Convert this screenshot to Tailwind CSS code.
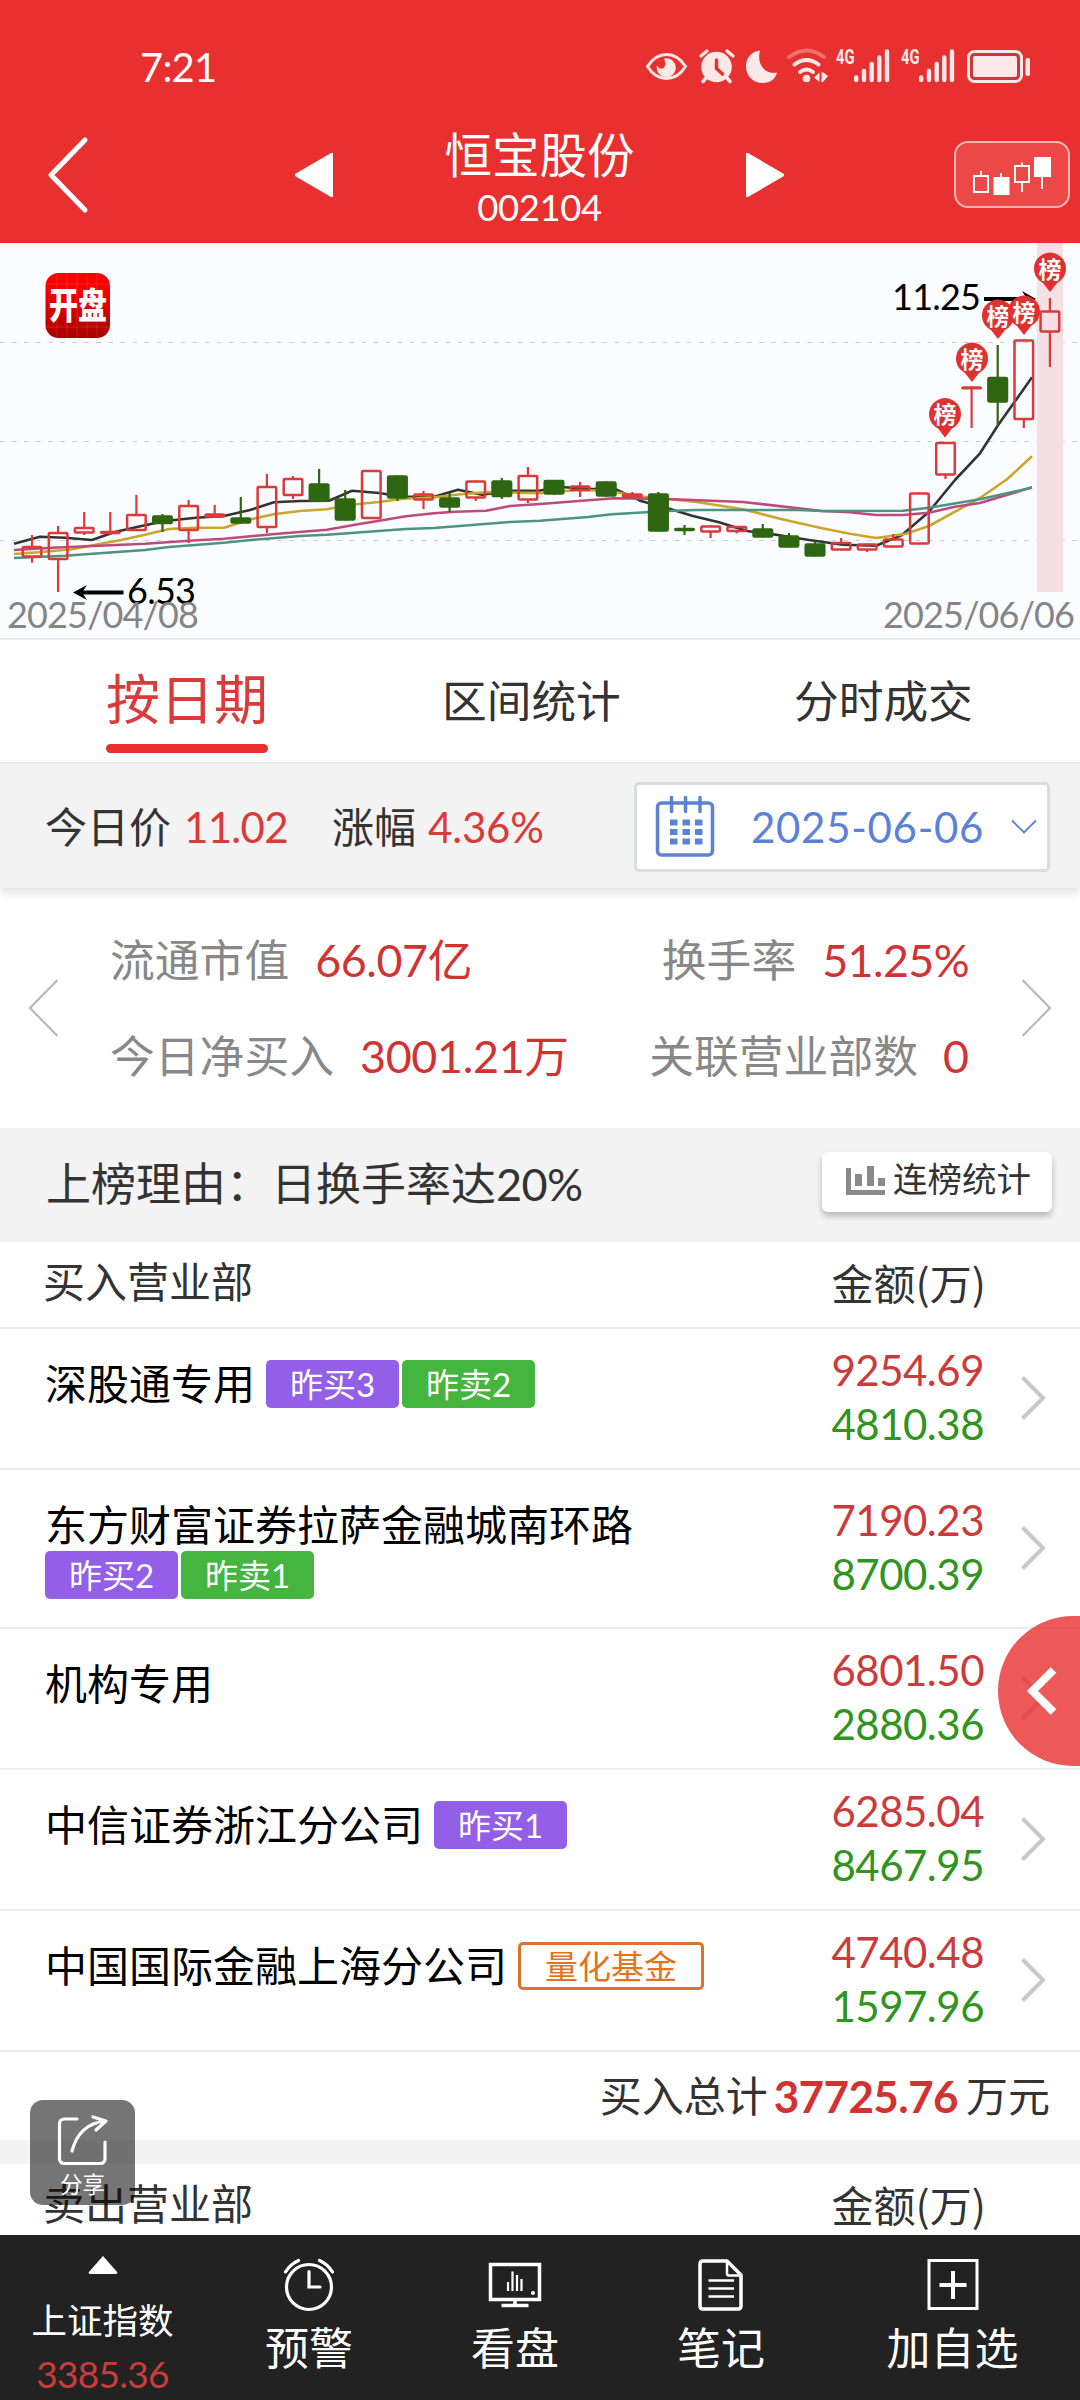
<!DOCTYPE html>
<html lang="zh-CN">
<head>
<meta charset="utf-8">
<title>恒宝股份 002104</title>
<script src="https://cdn.jsdelivr.net/npm/@tailwindcss/browser@4"></script>
</head>
<body class="bg-white">
<div class="relative flex h-[2400px] w-[1080px] flex-col overflow-hidden bg-white font-['Lato','Noto_Sans_CJK_SC',sans-serif] text-[42px] leading-none text-[#333] whitespace-nowrap">

  <!-- header -->
  <header class="flex h-[243px] shrink-0 flex-col bg-[#e83030] text-white">
    <div class="flex h-[134px] items-center justify-between pl-[140px] pr-[49px]">
      <span class="text-[40px] tracking-[-0.8px]">7:21</span>
      <svg class="h-[56px] w-[388px]" viewBox="643 38 388 56" fill="#fde8e8">
        <path d="M647.500 65.500Q655 53.500 666.500 53.500T685.500 65.500Q678 77.500 666.500 77.500T647.500 65.500Z" fill="none" stroke="#fde8e8" stroke-width="3"/>
        <path d="M664 57.500a9.500 9.500 0 1 1-7 7q3 5 6.500 2.500t.5-9.500Z"/>
        <circle cx="716.500" cy="66" r="15.300"/>
        <path d="M701 55l6-5M727 50l6 5M706 77l-3 3.500M727 77l3 3.500" stroke="#fde8e8" stroke-width="3.500" stroke-linecap="round"/>
        <path d="M716.500 59v8.500l6 5.500" fill="none" stroke="#e83030" stroke-width="3.500" stroke-linecap="round"/>
        <path d="M760 49.500C750 51 746 58 746 65.500C746 75 753 82 762.500 82C770 82 775.500 78 777 71.500C766 74 756 64 760 49.500Z"/>
        <g fill="none" stroke="#fde8e8" stroke-width="4" stroke-linecap="round">
          <path d="M789 56q18-13 35 0" opacity=".35"/>
          <path d="M794.500 63.500q12-9 24 0"/>
          <path d="M800 71q6.500-5 13 0"/>
        </g>
        <circle cx="806.500" cy="77.500" r="3.800"/>
        <path d="M819.500 71.500v9.500l-5.500-4.500zM821.500 71.500h2l4.500 3.500-5 6h-1.500z"/>
        <g font-family="Roboto" font-weight="700" font-size="20">
          <text x="836" y="62.500" textLength="18.500" lengthAdjust="spacingAndGlyphs">4G</text>
          <text x="901" y="62.500" textLength="18.500" lengthAdjust="spacingAndGlyphs">4G</text>
        </g>
        <g stroke="#fde8e8" stroke-width="4.400" stroke-linecap="round">
          <path d="M856.200 76.500v2.500M864 70v9M871.700 63v16M879.300 56.500v22.500M887 50.500v28.500"/>
          <path d="M921.200 76.500v2.500M929 70v9M936.700 63v16M944.300 56.500v22.500M952 50.500v28.500"/>
        </g>
        <rect x="968.500" y="50.500" width="53" height="30" rx="6" fill="#c83a3a" stroke="#fde8e8" stroke-width="3"/>
        <rect x="973" y="55" width="44" height="21" rx="2"/>
        <rect x="1025.500" y="57" width="4.500" height="18" rx="2"/>
      </svg>
    </div>
    <div class="flex h-[109px] items-center justify-between pl-[47px] pr-[10px]">
      <svg class="mt-[-28px] h-[78px] w-[42px]" viewBox="0 0 42 78" fill="none" stroke="#fff" stroke-width="5" stroke-linecap="round" stroke-linejoin="round"><path d="M38 4L4 39 38 74"/></svg>
      <svg class="mt-[-28px] ml-[94px] h-[46px] w-[40px]" viewBox="0 0 40 46" fill="#fff"><path d="M39 1v44h-2L1 24v-2L37 1z"/></svg>
      <div class="flex flex-col items-center pt-1">
        <div class="mt-[-11px] text-[47.500px] leading-[52px]">恒宝股份</div>
        <div class="mb-[8px] text-[36.500px] leading-[52px] tracking-[-0.400px]">002104</div>
      </div>
      <svg class="mt-[-28px] mr-[58px] h-[46px] w-[40px]" viewBox="0 0 40 46" fill="#fff"><path d="M1 1v44h2l36-21v-2L3 1z"/></svg>
      <div class="mt-[-28px] flex h-[67px] w-[116px] items-center justify-center rounded-[14px] border-2 border-[#f7b4b4] bg-[#ec4848]">
        <svg class="h-[40px] w-[80px]" viewBox="973 154 80 40" fill="none" stroke="#fff" stroke-width="2">
          <path d="M975 175h14v16h-14zM982 170v5M1016 165h14v16h-14zM1023 161.500v3.500M1023 181v10M1002 172v5M1043 175v13"/>
          <path fill="#fff" d="M995.500 177h14v16.500h-14zM1036 157h15v18h-15z"/>
        </svg>
      </div>
    </div>
  </header>

  <!-- daily K-line chart -->
  <section class="h-[397px] shrink-0 border-b-2 border-[#ebebee] bg-[#fbfcff]">
    <svg class="block h-[395px] w-[1080px]" viewBox="0 3 1080 395" fill="none">
      <defs>
        <linearGradient id="lg" x1="0" y1="0" x2="0" y2="1"><stop offset="0" stop-color="#f00"/><stop offset=".25" stop-color="#f80000"/><stop offset="1" stop-color="#a80000"/></linearGradient>
        <g id="pin">
          <path fill="#e03030" d="M0 23L-7 14A16 16 0 1 1 7 14Z"/>
          <text x="0" y="8.500" text-anchor="middle" font-size="23" font-weight="700" fill="#fff">榜</text>
        </g>
      </defs>
      <path d="M0 102.500H1080M0 201.500H1080M0 300.500H1080" stroke="#c9c9cf" stroke-width="1" stroke-dasharray="4.500 7.550"/>
      <rect x="45.500" y="33" width="64.500" height="65" rx="13" fill="url(#lg)"/>
      <path d="M57 34v63M67 34v63M77 34v63M87 34v63M97 34v63M46 44h63M46 87h63" stroke="#fff" stroke-opacity=".13"/>
      <text x="49" y="79" font-size="36" font-weight="900" fill="#fff" textLength="58" lengthAdjust="spacingAndGlyphs">开盘</text>
      <rect x="1037" y="3" width="26" height="349" fill="#f6dfe5"/>
      <g stroke-width="2.600" stroke-linejoin="round">
        <polyline stroke="#333" points="14,303.7 40,296.7 65,297.7 92,300 114,292.3 138,286.7 165,281 196,277.7 224,276 250,270 274,262.3 300,261 329,260.7 352,250.7 379,253 403,256.7 434,256.7 458,249.7 482,254.7 510,250.7 540,250.5 561,247 592,249 614,248.3 640,260.7 667,268 692,275.7 719,282.3 747,291 778,295 809,300 843,304.7 876,305.7 902,295 929,271.7 955,240 980,213.3 998,185.3 1032,137.3"/>
        <polyline stroke="#c9a62c" points="14,314 41,312 72,309.3 93,305.3 121,300 145,294.7 169,289 196,287.7 224,287.7 251,279.3 275,274 300,271 327,269.3 348,265 379,262 403,258.7 434,257.3 461,254.3 489,252 517,252.7 540,253.3 578,250 609,251 643,256.7 667,259 695,261.7 743,269.3 781,279 822,288.3 850,293.7 876,298 905,294 929,286 955,271.7 980,258 1007,239.3 1032,216.3"/>
        <polyline stroke="#bd4a7c" points="14,310 52,307.7 93,306 145,303.7 189,300.7 224,298.7 275,294 327,289.7 355,284.7 406,276.3 434,273.3 455,271.7 486,270.7 510,266 540,264 614,258.3 667,259 743,262 822,271 850,272.3 876,275 903,275 929,272.7 955,266.7 980,263 1032,247.3"/>
        <polyline stroke="#4a9480" points="14,318 65,315.7 145,310 169,307 224,302.7 251,300 300,296 327,294.7 406,289 434,288 510,282 540,280.7 588,277 612,274.3 667,271 695,270 798,270 822,271 903,270.7 929,267.7 980,259.3 1007,253.3 1032,247.7"/>
      </g>
      <g id="candles"></g>
      <path d="M78 352.500H123.500" stroke="#000" stroke-width="4"/>
      <path d="M73 352.500l14-7.500-5 7.500 5 7.500z" fill="#000"/>
      <path d="M984 59H1030" stroke="#000" stroke-width="4"/>
      <path d="M1036 59l-14-8 5 8-5 7.500z" fill="#000"/>
      <g font-size="36">
        <text x="892" y="70" fill="#000" textLength="89">11.25</text>
        <text x="127" y="363.500" fill="#000" textLength="69">6.53</text>
        <g fill="#858585">
          <text x="7" y="387.500" textLength="192">2025/04/08</text>
          <text x="883" y="387.500" textLength="192">2025/06/06</text>
        </g>
      </g>
      <use href="#pin" x="945" y="174.500"/><use href="#pin" x="972" y="119"/><use href="#pin" x="998" y="76"/><use href="#pin" x="1024" y="72"/><use href="#pin" x="1050" y="29"/>
    </svg>
  </section>

  <!-- tabs -->
  <nav class="flex h-[122px] shrink-0 items-center">
    <div class="relative ml-[106px] mr-[174px] flex h-full w-[162px] items-center justify-center pb-[2px] text-[54px] text-[#d93a3a]">按日期<i class="absolute bottom-[9px] left-0 h-[9px] w-full rounded-full bg-[#e83030]"></i></div>
    <div class="w-[179px] text-[44.700px]">区间统计</div>
    <div class="ml-[173px] text-[44.700px]">分时成交</div>
  </nav>

  <!-- price bar -->
  <section class="flex h-[126px] shrink-0 items-center border-t-2 border-[#ededed] bg-[#f3f3f3] pt-[2px] pl-[45px] pr-[30px] shadow-[0_6px_8px_rgba(0,0,0,0.1)]">
    <span class="text-[42px]">今日价</span>
    <span class="ml-[13px] w-[104px] tracking-[-0.700px] text-[#d93a3a]">11.02</span>
    <span class="ml-[44px] text-[42px]">涨幅</span>
    <span class="ml-[12px] tracking-[-0.200px] text-[#d93a3a]">4.36%</span>
    <div class="ml-auto flex h-[90px] w-[416px] items-center rounded-[5px] border-[3px] border-[#d9dde3] bg-white pl-[17px] text-[#5b82d6]">
      <svg class="h-[62px] w-[62px]" viewBox="0 0 62 62" fill="none" stroke="#5b82d6" stroke-width="3.500">
        <rect x="3.500" y="7" width="55" height="52" rx="4"/>
        <path d="M17.500 1.500v14M31.500 1.500v14M46 1.500v14" stroke-linecap="round"/>
        <path d="M16 26.500h33M16 36h33M16 45.500h33" stroke-width="6" stroke-dasharray="7.500 5"/>
      </svg>
      <span class="ml-[35px] w-[235px] text-[42px] tracking-[0.700px]">2025-06-06</span>
      <svg class="ml-[24px] h-[16px] w-[28px]" viewBox="0 0 28 16" fill="none" stroke="#5b82d6" stroke-width="1.800"><path d="M2 1.500L14 13.500 26 1.500"/></svg>
    </div>
  </section>

  <!-- statistics -->
  <section class="flex h-[240px] shrink-0 items-center px-[27px] text-[44.800px] text-[#888]">
    <svg class="h-[60px] w-[32px]" viewBox="0 0 32 60" fill="none" stroke="#b5b5b5" stroke-width="2"><path d="M30.500 2L3 30 30.500 58"/></svg>
    <div class="flex flex-1 flex-col gap-[51px] pl-[51px] pr-[52px]">
      <div class="flex justify-between">
        <div>流通市值<span class="ml-[26px] tracking-[-0.400px] text-[#d13333]">66.07亿</span></div>
        <div>换手率<span class="ml-[26px] tracking-[-0.600px] text-[#d13333]">51.25%</span></div>
      </div>
      <div class="flex justify-between">
        <div>今日净买入<span class="ml-[26px] tracking-[-0.300px] text-[#d13333]">3001.21万</span></div>
        <div>关联营业部数<span class="ml-[25px] text-[#d13333]">0</span></div>
      </div>
    </div>
    <svg class="h-[60px] w-[32px]" viewBox="0 0 32 60" fill="none" stroke="#b5b5b5" stroke-width="2"><path d="M1.500 2L29 30 1.500 58"/></svg>
  </section>

  <!-- reason -->
  <section class="flex h-[114px] shrink-0 items-center justify-between bg-[#f3f3f3] pl-[46px] pr-[28px] text-[45px]">
    <div class="mt-[-2px]">上榜理由：日换手率达<span class="tracking-[-0.600px]">20%</span></div>
    <div class="mt-[-7px] flex h-[60px] w-[230px] items-center rounded-[6px] bg-white pl-[24px] text-[34.500px] shadow-[0_4px_6px_rgba(0,0,0,0.25)]">
      <svg class="mt-[-4px] mr-[8px] h-[30px] w-[39px]" viewBox="0 0 39 30" fill="#8a8a8a"><path d="M0 3h5v22h34v5H0zM9 9h7v12h-7zM21 1h7v20h-7zM32 13h7v8h-7z"/></svg>
      <span class="-mt-[5px]">连榜统计</span>
    </div>
  </section>

  <!-- buy side -->
  <section class="flex shrink-0 flex-col text-black">
    <div class="flex h-[87px] items-center justify-between border-b-2 border-[#ededed] pl-[43px] pr-[94px] pb-[6px] text-[#333]"><span>买入营业部</span><span class="font-['Noto_Sans_CJK_SC',sans-serif]">金额(万)</span></div>

    <div class="flex h-[141px] items-center border-b-2 border-[#ededed] pl-[45px] pr-[32px]">
      <div class="mb-[30px] flex flex-1 items-center"><span class="mr-[11px]">深股通专用</span><b class="mr-[3px] h-[48px] w-[133px] rounded-[5px] bg-[#925fe6] text-center text-[33px] leading-[48px] font-normal text-white">昨买3</b><b class="h-[48px] w-[133px] rounded-[5px] bg-[#44b53e] text-center text-[33px] leading-[48px] font-normal text-white">昨卖2</b></div>
      <div class="mr-[36px] mt-[-4px] w-[153px] text-right leading-[54px] tracking-[-0.500px]"><div class="text-[#cc3b3b]">9254.69</div><div class="text-[#2f9420]">4810.38</div></div>
      <svg class="mt-[-1px] h-[46px] w-[28px]" viewBox="0 0 28 46" fill="none" stroke="#c8c8c8" stroke-width="4"><path d="M2.500 2.500L23 23 2.500 43.500"/></svg>
    </div>

    <div class="flex h-[159px] items-center border-b-2 border-[#ededed] pl-[45px] pr-[32px]">
      <div class="mt-[4px] flex flex-1 flex-col"><span class="mb-[4px] leading-[44px]">东方财富证券拉萨金融城南环路</span><span class="flex"><b class="mr-[3px] h-[48px] w-[133px] rounded-[5px] bg-[#925fe6] text-center text-[33px] leading-[48px] font-normal text-white">昨买2</b><b class="h-[48px] w-[133px] rounded-[5px] bg-[#44b53e] text-center text-[33px] leading-[48px] font-normal text-white">昨卖1</b></span></div>
      <div class="mr-[36px] mt-[-4px] w-[153px] text-right leading-[54px] tracking-[-0.500px]"><div class="text-[#cc3b3b]">7190.23</div><div class="text-[#2f9420]">8700.39</div></div>
      <svg class="mt-[-1px] h-[46px] w-[28px]" viewBox="0 0 28 46" fill="none" stroke="#c8c8c8" stroke-width="4"><path d="M2.500 2.500L23 23 2.500 43.500"/></svg>
    </div>

    <div class="flex h-[141px] items-center border-b-2 border-[#ededed] pl-[45px] pr-[32px]">
      <div class="mb-[30px] flex flex-1 items-center">机构专用</div>
      <div class="mr-[36px] mt-[-4px] w-[153px] text-right leading-[54px] tracking-[-0.500px]"><div class="text-[#cc3b3b]">6801.50</div><div class="text-[#2f9420]">2880.36</div></div>
      <svg class="mt-[-1px] h-[46px] w-[28px]" viewBox="0 0 28 46" fill="none" stroke="#c8c8c8" stroke-width="4"><path d="M2.500 2.500L23 23 2.500 43.500"/></svg>
    </div>

    <div class="flex h-[141px] items-center border-b-2 border-[#ededed] pl-[45px] pr-[32px]">
      <div class="mb-[30px] flex flex-1 items-center"><span class="mr-[11px]">中信证券浙江分公司</span><b class="h-[48px] w-[133px] rounded-[5px] bg-[#925fe6] text-center text-[33px] leading-[48px] font-normal text-white">昨买1</b></div>
      <div class="mr-[36px] mt-[-4px] w-[153px] text-right leading-[54px] tracking-[-0.500px]"><div class="text-[#cc3b3b]">6285.04</div><div class="text-[#2f9420]">8467.95</div></div>
      <svg class="mt-[-1px] h-[46px] w-[28px]" viewBox="0 0 28 46" fill="none" stroke="#c8c8c8" stroke-width="4"><path d="M2.500 2.500L23 23 2.500 43.500"/></svg>
    </div>

    <div class="flex h-[141px] items-center border-b-2 border-[#ededed] pl-[45px] pr-[32px]">
      <div class="mb-[30px] flex flex-1 items-center"><span class="mr-[11px]">中国国际金融上海分公司</span><b class="h-[48px] w-[186px] rounded-[5px] border-[3px] border-[#dc722b] text-center text-[33px] leading-[42px] font-normal text-[#e0741f]">量化基金</b></div>
      <div class="mr-[36px] mt-[-4px] w-[153px] text-right leading-[54px] tracking-[-0.500px]"><div class="text-[#cc3b3b]">4740.48</div><div class="text-[#2f9420]">1597.96</div></div>
      <svg class="mt-[-1px] h-[46px] w-[28px]" viewBox="0 0 28 46" fill="none" stroke="#c8c8c8" stroke-width="4"><path d="M2.500 2.500L23 23 2.500 43.500"/></svg>
    </div>

    <div class="flex h-[88px] items-center justify-end pr-[30px] pb-[1px] text-[#333]">买入总计<span class="mr-[8px] ml-[6px] text-[44px] font-bold tracking-[-0.600px] text-[#d13333]">37725.76</span>万元</div>
  </section>

  <!-- sell side -->
  <section class="h-[95px] shrink-0 border-t-[24px] border-[#f3f3f3]">
    <div class="flex h-[80px] items-center justify-between pl-[43px] pr-[94px]"><span>卖出营业部</span><span class="font-['Noto_Sans_CJK_SC',sans-serif]">金额(万)</span></div>
  </section>

  <!-- bottom bar -->
  <footer class="grid h-[165px] shrink-0 grid-cols-[206px_206px_206px_206px_257px] bg-[#222] text-white">
    <div class="flex flex-col items-center pt-[20px] pr-[1px]">
      <svg class="h-[20px] w-[30px]" viewBox="0 0 30 20" fill="#fff"><path d="M15 1L29.500 17.500 28.500 19H1.500L.5 17.500z"/></svg>
      <span class="mt-[28px] text-[35.500px]">上证指数</span>
      <span class="mt-[16px] text-[37px] tracking-[-0.700px] text-[#c93c3c]">3385.36</span>
    </div>
    <div class="flex flex-col items-center pt-[23px]">
      <svg class="h-[54px] w-[54px]" viewBox="0 0 54 54" fill="none" stroke="#fff" stroke-width="3.200" stroke-linecap="round"><circle cx="27" cy="29" r="22.500"/><path d="M27 13.500v15.500h11M3.500 14q5-8 13-11.500M50.500 14q-5-8-13-11.500"/></svg>
      <span class="mt-[14px] text-[44px]">预警</span>
    </div>
    <div class="flex flex-col items-center pt-[23px]">
      <svg class="h-[54px] w-[54px]" viewBox="0 0 54 54" fill="none" stroke="#fff" stroke-width="3"><path d="M2.500 6.500h49v35h-49zM13.500 47.500h27M27 42v5" stroke-width="3.500"/><path d="M20 24v9M24.500 13.500v19.500M29 17v16M33.500 21v12" stroke-width="2.200"/><circle cx="45" cy="35" r="2" fill="#fff" stroke="none"/></svg>
      <span class="mt-[14px] text-[44px]">看盘</span>
    </div>
    <div class="flex flex-col items-center pt-[23px]">
      <svg class="h-[54px] w-[54px]" viewBox="0 0 54 54" fill="none" stroke="#fff" stroke-width="3.500" stroke-linejoin="round"><path d="M9 3h24l14 14v31q0 3-3 3H9q-3 0-3-3V6q0-3 3-3z"/><path d="M33 4v11.500q0 2 2 2h12" stroke-width="2.500"/><path d="M14.500 22.500h25.500M14.500 30.500h25.500M14.500 38.500h25.500" stroke-width="2.500"/></svg>
      <span class="mt-[14px] text-[44px]">笔记</span>
    </div>
    <div class="flex flex-col items-center pt-[23px]">
      <svg class="h-[54px] w-[54px]" viewBox="0 0 54 54" fill="none" stroke="#fff"><path d="M3 2.500h48v48H3z" stroke-width="3"/><path d="M27 13v28M13.500 27h27" stroke-width="4"/></svg>
      <span class="mt-[14px] text-[44px]">加自选</span>
    </div>
  </footer>

  <!-- floating buttons -->
  <div class="absolute top-[1616px] right-0 flex h-[150px] w-[82px] items-center rounded-l-full bg-[#e83030]/80 pl-[28px]">
    <svg class="h-[50px] w-[32px]" viewBox="0 0 32 50" fill="none" stroke="#fff" stroke-width="8"><path d="M27.500 4L6.500 25 27.500 46"/></svg>
  </div>
  <div class="absolute top-[2100px] left-[30px] flex h-[105px] w-[105px] flex-col items-center rounded-[13px] bg-black/54 pt-[14px] text-white">
    <svg class="h-[52px] w-[52px]" viewBox="0 0 52 52" fill="none" stroke="#fff" stroke-width="3.200" stroke-linecap="round" stroke-linejoin="round"><path d="M20 5H7.500Q2.500 5 2.500 10V44.500Q2.500 49.500 7.500 49.500H43Q48 49.500 48 44.500V28M15 37Q22 10 48 7M36 3l13 4-10 9"/></svg>
    <span class="mt-[8px] text-[22.500px]">分享</span>
  </div>
</div>

<script>
  // [wick top, body top, body bottom, wick bottom, falling?]
  const days = [
    [295,306,317.500,322.700],[286,292,320,352],[272,287,293.500,295],[272,291,294,294],[255,274,291,291],
    [274,275.500,284,292,1],[260,265,291,303],[265,273.500,277.500,277.500],[257,277.500,283.500,283.500,1],[234,246,288,293],
    [236,238,256,259],[229,243.500,261.500,261.500,1],[250,258.500,280.500,280.500,1],[230,230,279,279],[235.500,235.500,258.500,261,1],
    [251,253.500,260.500,269],[253,257.500,267.500,272,1],[240.500,240.500,258.500,261],[238,240.500,257,259,1],[227,235,260.500,263],
    [240,240,254.500,255,1],[242,245.500,251,257],[241.500,241.500,256.500,257,1],[252,253.500,258,258],[252,253.500,291.500,291.500,1],
    [285,288,291,295,1],[285.500,285.500,292.500,298],[286,286,292,293.500],[284,288.500,297.500,297.500,1],[293,295.500,307.500,307.500,1],
    [301.500,303.500,316.500,316.500,1],[298,302,310.500,310.500],[303.500,303.500,310.500,312],[294,298.500,307.500,307.500],[252.500,252.500,304.500,304.500],
    [202,202,235.500,239],[146.500,146.500,149,188],[105,137,162.500,186,1],[99.500,99.500,180,188],[58,70.500,92.500,127]
  ];
  document.getElementById('candles').innerHTML = days.map(([wt, bt, bb, wb, down], i) => {
    const x = 32 + 26.1 * i, c = down ? '#2f6612' : '#dc3a3a';
    const h = Math.max(bb - bt - 2, 0.8);
    return `<path d="M${x} ${wt}V${bt + 1}M${x} ${bb - 1}V${wb}" stroke="${c}" stroke-width="2.200"/>` +
      `<rect x="${x - 9.300}" y="${bt + 1}" width="18.600" height="${h}" rx="1" stroke="${c}" stroke-width="2.500" fill="${down ? c : 'none'}"/>`;
  }).join('');
</script>
</body>
</html>
